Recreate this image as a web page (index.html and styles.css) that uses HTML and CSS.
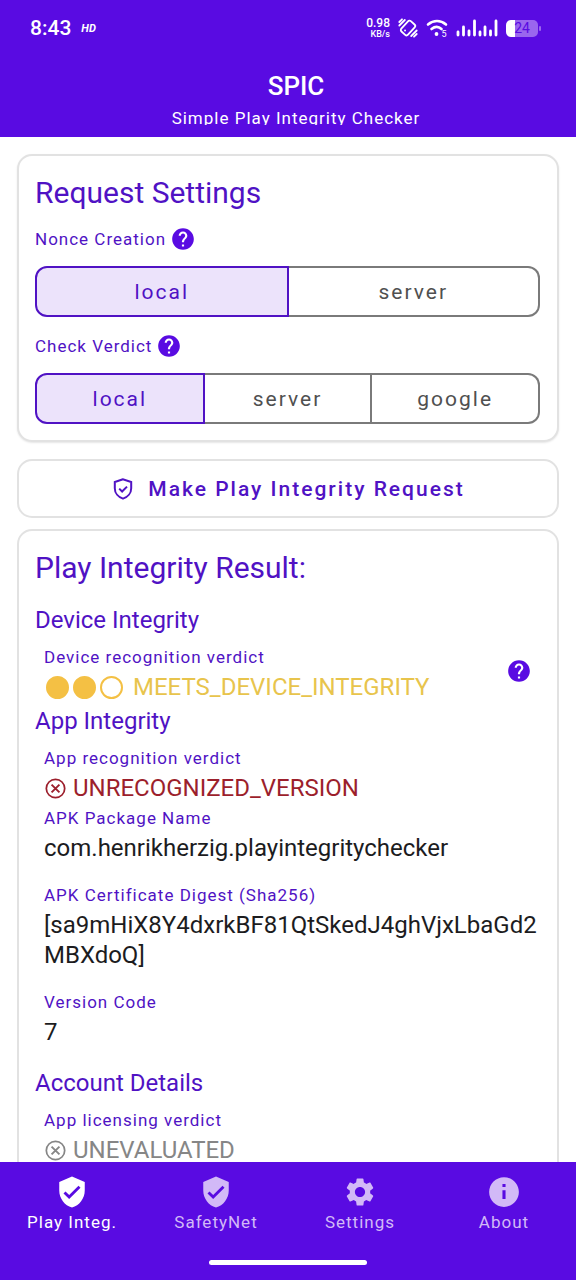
FILE: index.html
```html
<!DOCTYPE html>
<html lang="en">
<head>
<meta charset="utf-8">
<meta name="viewport" content="width=device-width, initial-scale=1">
<title>SPIC</title>
<link rel="stylesheet" href="styles.css">
</head>
<body>
<svg class="sprite" aria-hidden="true">
  <symbol id="help" viewBox="0 0 24 24"><path d="M12 2C6.48 2 2 6.48 2 12s4.480 10 10 10 10-4.480 10-10S17.520 2 12 2zm1 17h-2v-2h2v2zm2.070-7.750l-.9.920C13.450 12.900 13 13.500 13 15h-2v-.5c0-1.100.450-2.100 1.170-2.830l1.240-1.260c.370-.360.590-.860.590-1.410 0-1.100-.9-2-2-2s-2 .9-2 2H8c0-2.210 1.790-4 4-4s4 1.790 4 4c0 .880-.360 1.680-.930 2.250z"/></symbol>
  <symbol id="shield" viewBox="0 0 24 24"><path d="M12 1L3 5v6c0 5.550 3.840 10.740 9 12 5.160-1.260 9-6.450 9-12V5l-9-4zm-2 16l-4-4 1.410-1.410L10 14.170l6.590-6.590L18 9l-8 8z"/></symbol>
  <symbol id="shield-outline" viewBox="0 0 24 24"><path d="M12 2.200L3.800 5v6.200c0 4.900 3.500 9 8.200 10.400 4.700-1.400 8.200-5.500 8.200-10.400V5L12 2.200zM8.200 11.600l2.900 2.900 4.900-4.900" fill="none" stroke="currentColor" stroke-width="2"/></symbol>
  <symbol id="cross" viewBox="0 0 24 24"><circle cx="12" cy="12" r="10.500" fill="none" stroke="currentColor" stroke-width="2"/><path d="M7.500 7.500l9 9m0-9l-9 9" fill="none" stroke="currentColor" stroke-width="2.200"/></symbol>
</svg>
<header class="top">
  <div class="status">
    <time class="clock">8:43</time><span class="hd">HD</span>
    <div class="status-icons">
      <div class="rate"><span>0.98</span><small>KB/s</small></div>
      <svg class="vibrate" viewBox="0 0 20 20" stroke="currentColor" stroke-width="1.800" stroke-linecap="round"><rect x="5.500" y="3" width="9" height="14" rx="2" transform="rotate(42 10 10)"/><path d="M1.300 7.500l5.500-5.500M1.300 4L4 1.300M18.700 12.500l-5.500 5.500M18.700 16L16 18.700"/><path d="M7 12.500h.1"/></svg>
      <svg class="wifi" viewBox="0 0 22 18" stroke="currentColor" stroke-width="2.600" stroke-linecap="round"><path d="M2 5.500C7.500.9 14.500.9 20 5.500M5.500 10c3.500-2.800 7-2.800 10 0"/><circle cx="10.500" cy="15" r="1.900" fill="currentColor" stroke="none"/><text class="wifi-gen" x="15.500" y="17.500">5</text></svg>
      <svg class="signal" viewBox="0 0 42 18" stroke="currentColor" stroke-width="2.800" stroke-linecap="round"><path d="M2 13v3M7.500 8v8M13 12v4M18.500 2v14M24 13v3M29 8v8M34.500 12v4M40 2v14"/></svg>
      <div class="battery"><span class="charge">24</span></div>
    </div>
  </div>
  <div class="titles">
    <h1>SPIC</h1>
    <p>Simple Play Integrity Checker</p>
  </div>
</header>
<main class="content">
  <section class="card settings">
    <h2>Request Settings</h2>
    <div class="label"><span id="nonce">Nonce Creation</span><button class="help" aria-label="About nonce creation"><svg><use href="#help"/></svg></button></div>
    <div class="segments" role="group" aria-labelledby="nonce">
      <button aria-pressed="true">local</button><button aria-pressed="false">server</button>
    </div>
    <div class="label"><span id="verdict">Check Verdict</span><button class="help" aria-label="About check verdict"><svg><use href="#help"/></svg></button></div>
    <div class="segments" role="group" aria-labelledby="verdict">
      <button aria-pressed="true">local</button><button aria-pressed="false">server</button><button aria-pressed="false">google</button>
    </div>
  </section>
  <button class="card request"><svg><use href="#shield-outline"/></svg>Make Play Integrity Request</button>
  <section class="card result">
    <h2>Play Integrity Result:</h2>
    <h3>Device Integrity</h3>
    <div class="device">
      <dl>
        <dt>Device recognition verdict</dt>
        <dd class="partial"><span class="dots"><i class="dot full"></i><i class="dot full"></i><i class="dot"></i></span>MEETS_DEVICE_INTEGRITY</dd>
      </dl>
      <button class="help" aria-label="About device integrity"><svg><use href="#help"/></svg></button>
    </div>
    <h3>App Integrity</h3>
    <dl>
      <dt>App recognition verdict</dt>
      <dd class="failed"><svg><use href="#cross"/></svg>UNRECOGNIZED_VERSION</dd>
      <dt>APK Package Name</dt>
      <dd class="spaced">com.henrikherzig.playintegritychecker</dd>
      <dt>APK Certificate Digest (Sha256)</dt>
      <dd class="spaced">[sa9mHiX8Y4dxrkBF81QtSkedJ4ghVjxLbaGd2<wbr>MBXdoQ]</dd>
      <dt>Version Code</dt>
      <dd class="spaced">7</dd>
    </dl>
    <h3>Account Details</h3>
    <dl>
      <dt>App licensing verdict</dt>
      <dd class="unknown"><svg><use href="#cross"/></svg>UNEVALUATED</dd>
    </dl>
  </section>
</main>
<footer class="bottom">
  <nav class="tabs">
    <a href="#play" aria-current="page"><svg><use href="#shield"/></svg>Play Integ.</a>
    <a href="#safetynet"><svg><use href="#shield"/></svg>SafetyNet</a>
    <a href="#settings"><svg viewBox="0 0 24 24"><path d="M19.140 12.940c.040-.3.060-.610.060-.940 0-.320-.020-.640-.070-.940l2.030-1.580c.180-.140.230-.410.120-.610l-1.920-3.320c-.120-.220-.370-.290-.590-.220l-2.390.960c-.5-.380-1.030-.7-1.620-.940l-.360-2.540c-.040-.240-.240-.410-.480-.410h-3.840c-.240 0-.430.170-.470.410l-.360 2.540c-.590.240-1.130.570-1.620.940l-2.390-.960c-.220-.080-.470 0-.590.220L2.740 8.870c-.120.210-.080.470.120.610l2.030 1.580c-.050.3-.090.630-.090.940s.020.640.070.940l-2.030 1.580c-.180.140-.230.410-.120.610l1.920 3.320c.120.220.370.290.590.220l2.390-.960c.5.380 1.030.7 1.620.940l.360 2.540c.050.240.240.410.480.410h3.840c.240 0 .440-.170.470-.410l.360-2.540c.590-.240 1.130-.560 1.620-.940l2.390.960c.220.080.470 0 .590-.220l1.920-3.320c.120-.220.070-.470-.120-.610l-2.010-1.580zM12 15.600c-1.980 0-3.600-1.620-3.600-3.600s1.620-3.600 3.600-3.600 3.600 1.620 3.600 3.600-1.620 3.600-3.600 3.600z"/></svg>Settings</a>
    <a href="#about"><svg viewBox="0 0 24 24"><path d="M12 1.500C6.200 1.500 1.500 6.200 1.500 12S6.200 22.500 12 22.500 22.500 17.800 22.500 12 17.800 1.500 12 1.500zm1.100 15.500h-2.200v-6.200h2.200V17zm0-8.500h-2.200V6.300h2.200v2.200z"/></svg>About</a>
  </nav>
  <div class="gesture"></div>
</footer>
</body>
</html>
```
FILE: styles.css
```css
:root {
  --purple: #590be2;
  --ink: #5012c4;
  --line: #e2e2e2;
}
* { box-sizing: border-box; }
body {
  margin: 0;
  height: 100vh;
  display: flex;
  flex-direction: column;
  background: #fff;
  font-family: Roboto, "Noto Sans", sans-serif;
  color: #1c1c1e;
}
h1, h2, h3, p, dl, dd { margin: 0; font-weight: 400; }
button { font: inherit; margin: 0; cursor: pointer; }
svg { fill: currentColor; flex: none; }
.sprite { position: absolute; width: 0; height: 0; }

.top { background: var(--purple); color: #fff; padding-bottom: 12px; flex: none; }
.status { display: flex; align-items: center; height: 56px; padding: 0 38px 0 30px; }
.status svg { fill: none; }
.clock { font-size: 21px; font-weight: 500; }
.hd { margin-left: 10px; font-size: 11px; font-weight: 700; font-style: italic; }
.status-icons { display: flex; align-items: center; gap: 8px; margin-left: auto; }
.rate { display: flex; flex-direction: column; align-items: flex-end; font-size: 12px; line-height: 12px; font-weight: 500; }
.rate small { font-size: 9px; line-height: 11px; }
.vibrate { width: 20px; height: 20px; }
.wifi { width: 22px; height: 18px; }
.wifi-gen { font-size: 9px; fill: currentColor; stroke: none; }
.signal { width: 42px; height: 18px; }
.battery {
  position: relative;
  width: 32px;
  height: 17px;
  border-radius: 5px;
  background: linear-gradient(90deg, #fff 28%, #9a66ee 28%);
  color: var(--purple);
  text-align: center;
  font-size: 14px;
  line-height: 17px;
}
.battery::after { content: ""; position: absolute; right: -3px; top: 6px; width: 2px; height: 5px; border-radius: 1px; background: #9a66ee; }
.titles { padding: 14px 0 0 16px; text-align: center; }
.titles h1 { font-size: 26px; line-height: 32px; font-weight: 500; }
.titles p { margin-top: 5px; height: 18px; overflow: hidden; font-size: 17px; line-height: 22px; letter-spacing: 1px; }

.content { flex: 1; min-height: 0; overflow: hidden; padding: 17px 17px 0; }
.card { display: block; width: 100%; border: 2px solid var(--line); border-radius: 15px; background: #fff; }
.settings { padding: 18px 17px 16px 16px; box-shadow: 0 1px 2px #0000001a; }
.card h2 { font-size: 30px; line-height: 38px; color: var(--ink); }
.label { display: flex; align-items: center; gap: 4px; height: 26px; margin: 16px 0 14px; font-size: 17px; letter-spacing: 1px; color: var(--ink); }
.settings h2 + .label { margin-top: 14px; }
.help { display: flex; padding: 0; border: 0; background: none; color: var(--purple); }
.help svg { width: 26px; height: 26px; }
.segments { display: flex; }
.segments button {
  flex: 1;
  height: 51px;
  padding: 0;
  border: 2px solid #7a7a7a;
  border-left-width: 0;
  background: #fff;
  color: #505050;
  font-size: 21px;
  letter-spacing: 2px;
}
.segments button:first-child { border-left-width: 2px; border-radius: 12px 0 0 12px; }
.segments button:last-child { border-radius: 0 12px 12px 0; }
.segments button[aria-pressed="true"] { border-color: var(--ink); background: #ece3fb; color: var(--ink); }
.request { display: flex; align-items: center; justify-content: center; gap: 13px; height: 59px; margin: 17px 0 11px; padding: 0; color: var(--ink); font-size: 21px; font-weight: 500; letter-spacing: 2px; }
.request svg { width: 24px; height: 24px; }

.result { padding: 18px 16px; }
.result h3 { font-size: 24px; line-height: 38px; color: var(--ink); }
.result h2 + h3 { margin-top: 14px; }
.result dl { padding: 3px 0 0 9px; line-height: 30px; }
dt { font-size: 17px; letter-spacing: 1px; color: var(--ink); }
dd { display: flex; flex-wrap: wrap; align-items: center; gap: 7px; font-size: 24px; }
dd svg { width: 21px; height: 21px; margin-left: 1px; }
dd.spaced { display: block; margin-bottom: 17px; }
.device { display: flex; align-items: center; justify-content: space-between; padding-right: 9px; }
.partial { gap: 10px; color: #e8c44c; }
.dots { display: flex; gap: 4px; padding-left: 2px; }
.dot { width: 23px; height: 23px; border: 2px solid #f4c044; border-radius: 50%; }
.full { background: #f4c044; }
.failed { color: #9c1f2c; }
.unknown { color: #868686; }

.bottom { flex: none; display: flex; flex-direction: column; align-items: center; gap: 27px; padding: 12px 0 15px; background: var(--purple); }
.tabs { display: flex; align-self: stretch; }
.tabs a { flex: 1; display: flex; flex-direction: column; align-items: center; color: #d2b9f7; text-decoration: none; font-size: 17px; line-height: 22px; letter-spacing: 1px; }
.tabs a[aria-current] { color: #fff; }
.tabs svg { width: 36px; height: 36px; padding: 1px; margin-bottom: 1px; }
.gesture { width: 158px; height: 5px; border-radius: 3px; background: #fff; }
```
